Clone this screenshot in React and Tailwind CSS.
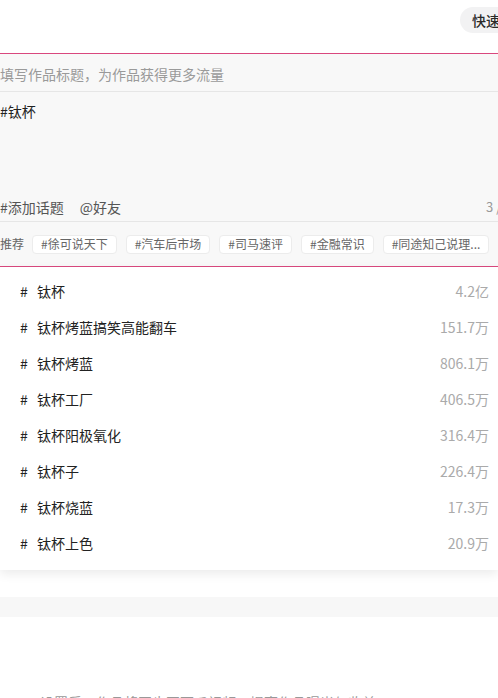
import { useState } from 'react';

const suggestions = [
  { name: '钛杯', count: '4.2亿' },
  { name: '钛杯烤蓝搞笑高能翻车', count: '151.7万' },
  { name: '钛杯烤蓝', count: '806.1万' },
  { name: '钛杯工厂', count: '406.5万' },
  { name: '钛杯阳极氧化', count: '316.4万' },
  { name: '钛杯子', count: '226.4万' },
  { name: '钛杯烧蓝', count: '17.3万' },
  { name: '钛杯上色', count: '20.9万' },
];

const recommended = ['#徐可说天下', '#汽车后市场', '#司马速评', '#金融常识', '#同途知己说理...'];

const App = () => {
  const [body] = useState('#钛杯');

  return (
    <div
      className="w-[498px] h-[698px] overflow-hidden bg-white text-[#333]"
      style={{ fontFamily: '"Noto Sans CJK SC", "Noto Sans", sans-serif' }}
    >
      {/* top bar */}
      <div className="flex h-[53px] justify-end pt-[7px]">
        <button className="-mr-[40px] flex h-[26px] w-[78px] shrink-0 items-center rounded-full bg-[#f2f2f3] pl-[12px] text-[14px] font-medium leading-[20px] text-[#2a2a2a]">
          快速发布
        </button>
      </div>

      {/* editor */}
      <div className="border-y border-[#d9487e] bg-[#f8f8f8]">
        <div className="flex h-[38px] items-center border-b border-[#e6e6e6] pt-[2px] text-[14px] leading-[20px] text-[#9a9a9a]">
          填写作品标题，为作品获得更多流量
        </div>
        <div className="h-[100px] pt-[9px] text-[14px] leading-[20px] text-[#222]">{body}</div>
        <div className="flex h-[30px] items-center border-b border-[#e6e6e6] text-[14px] leading-[20px] text-[#555]">
          <span>#添加话题</span>
          <span className="ml-[16px]">@好友</span>
          <span className="-mr-[35px] ml-auto shrink-0 whitespace-nowrap text-[13px] text-[#999]">3 / 1000</span>
        </div>
        <div className="flex h-[44px] items-center whitespace-nowrap">
          <span className="mr-[8px] text-[12px] leading-[18px] text-[#666]">推荐</span>
          {recommended.map((tag) => (
            <span
              key={tag}
              className="mr-[9px] flex h-[19px] items-center rounded-[4px] border border-[#ececec] bg-white px-[8px] text-[12px] leading-[16px] text-[#666]"
            >
              {tag}
            </span>
          ))}
        </div>
      </div>

      {/* topic dropdown */}
      <div className="bg-white pb-[9px] pt-[6px] shadow-[0_4px_10px_rgba(0,0,0,0.08)]">
        {suggestions.map((item) => (
          <div key={item.name} className="flex h-[36px] items-center text-[14px] leading-[20px]">
            <span className="ml-[20px] w-[17px] text-[#222]">#</span>
            <span className="text-[#222]">{item.name}</span>
            <span className="ml-auto mr-[9px] text-[#aaa]">{item.count}</span>
          </div>
        ))}
      </div>

      <div className="mt-[27px] h-[20px] bg-[#f7f7f7]" />

      <div className="mt-[75px] pl-[40px] text-[14px] leading-[20px] text-[#999]">
        设置后，作品将同步至西瓜视频，提高作品曝光与收益
      </div>
    </div>
  );
};

export default App;
